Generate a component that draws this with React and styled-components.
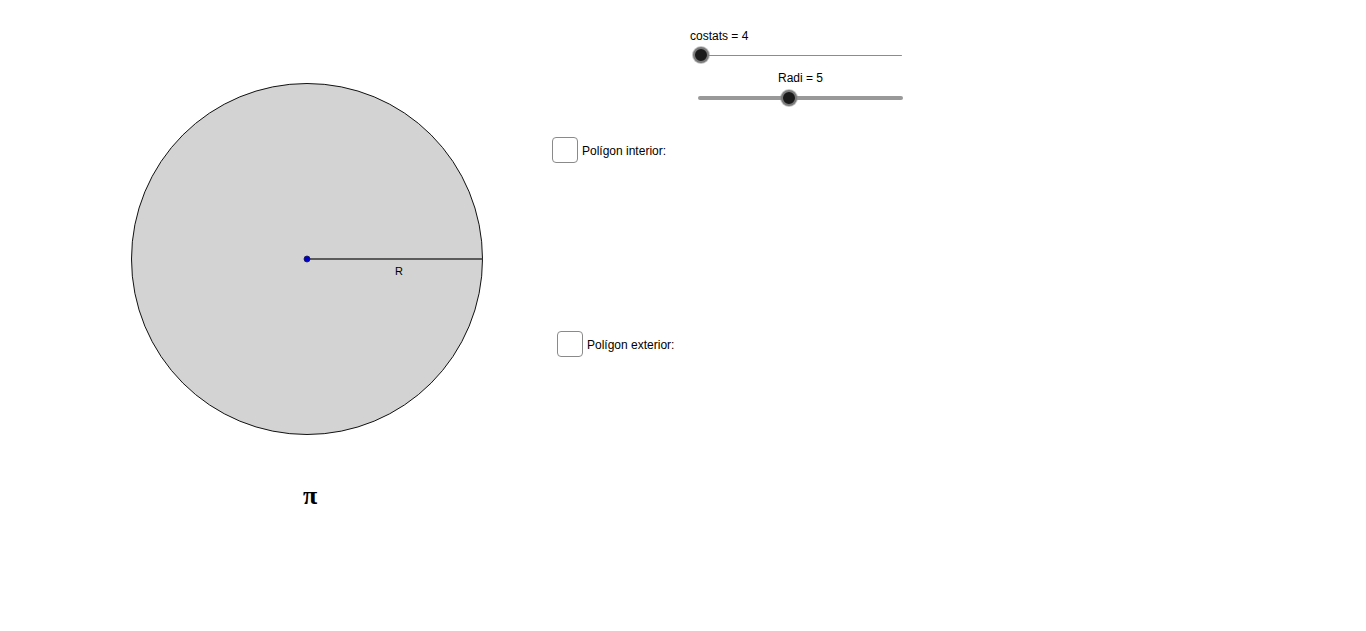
import React from "react";
import styled, { createGlobalStyle } from "styled-components";

const GlobalStyle = createGlobalStyle`
  html, body {
    margin: 0;
    padding: 0;
    background: #fff;
    overflow: hidden;
  }
  body {
    font-family: "Liberation Sans", Arial, sans-serif;
  }
`;

// GeoGebra-like graphics view: objects sit at their own canvas coordinates
const Canvas = styled.div`
  position: relative;
  width: 1366px;
  height: 631px;
  background: #fff;
`;

const Drawing = styled.svg`
  position: absolute;
  top: 0;
  left: 0;
`;

const SliderPanel = styled.div`
  position: absolute;
  left: 690px;
  top: 29px;
  width: 213px;
  display: flex;
  flex-direction: column;
  gap: 8px;
`;

const SliderBox = styled.div`
  display: flex;
  flex-direction: column;
  gap: ${p => p.$gap}px;
`;

const SliderLabel = styled.div`
  font-size: 12px;
  line-height: 14px;
  height: 14px;
  color: #000;
  white-space: nowrap;
  text-align: ${p => p.$align};
  padding-left: ${p => (p.$align === "center" ? p.$inset : 0)}px;
  padding-right: ${p => (p.$align === "center" ? p.$end : 0)}px;
`;

const Rail = styled.div`
  position: relative;
  height: 16px;
  margin-left: ${p => p.$inset}px;
  margin-right: ${p => p.$end}px;
  display: flex;
  align-items: center;
`;

const Track = styled.div`
  flex: 1;
  height: ${p => p.$thick}px;
  border-radius: ${p => p.$thick}px;
  background: ${p => (p.$thick > 1 ? "#999" : "#8c8c8c")};
`;

const Knob = styled.div`
  position: absolute;
  top: 0;
  width: 12px;
  height: 12px;
  margin-left: -8px;
  border-radius: 50%;
  background: #1a1a1a;
  border: 2px solid #7a7a7a;
  box-shadow: 0 0 0 1px rgba(140, 140, 140, 0.5);
`;

const CheckRow = styled.label`
  position: absolute;
  left: ${p => p.$x}px;
  top: ${p => p.$y}px;
  display: flex;
  align-items: center;
  gap: 4px;
  font-size: 12px;
  line-height: 14px;
  color: #000;
`;

const Box = styled.span`
  width: 24px;
  height: 24px;
  border: 1.5px solid #8a8a8a;
  border-radius: 4px;
  background: #fff;
`;

const CheckText = styled.span`
  padding-top: 1px;
`;

function Slider({ label, align, inset, end, gap, thick, min, max, value }) {
  const frac = (value - min) / (max - min);
  return (
    <SliderBox $gap={gap}>
      <SliderLabel $align={align} $inset={inset} $end={end}>{label}</SliderLabel>
      <Rail $inset={inset} $end={end}>
        <Track $thick={thick} />
        <Knob style={{ left: `${frac * 100}%` }} />
      </Rail>
    </SliderBox>
  );
}

function Check({ x, y, label }) {
  return (
    <CheckRow $x={x} $y={y}>
      <Box />
      <CheckText>{label}</CheckText>
    </CheckRow>
  );
}

export default function App() {
  return (
    <>
      <GlobalStyle />
      <Canvas>
        <Drawing width="1366" height="631" viewBox="0 0 1366 631">
          <circle cx="307" cy="259" r="175.5" fill="#d3d3d3" stroke="#111" strokeWidth="1" />
          <line x1="307" y1="259" x2="483" y2="259" stroke="#333" strokeWidth="1.3" />
          <circle cx="307" cy="259" r="3" fill="#0000cc" stroke="#1a1a4a" strokeWidth="0.8" />
          <text x="399" y="275" fontSize="11" textAnchor="middle" fontFamily="Liberation Sans, Arial, sans-serif">R</text>
          <text x="310" y="504" fontSize="26" fontWeight="bold" textAnchor="middle" fontFamily="Liberation Serif, Times New Roman, serif">π</text>
        </Drawing>
        <SliderPanel>
          <Slider label="costats = 4" align="left" inset={11} end={1} gap={4} thick={1} min={4} max={40} value={4} />
          <Slider label="Radi = 5" align="center" inset={8} end={0} gap={5} thick={4} min={1} max={10} value={5} />
        </SliderPanel>
        <Check x={552} y={137} label="Polígon interior:" />
        <Check x={557} y={331} label="Polígon exterior:" />
      </Canvas>
    </>
  );
}
